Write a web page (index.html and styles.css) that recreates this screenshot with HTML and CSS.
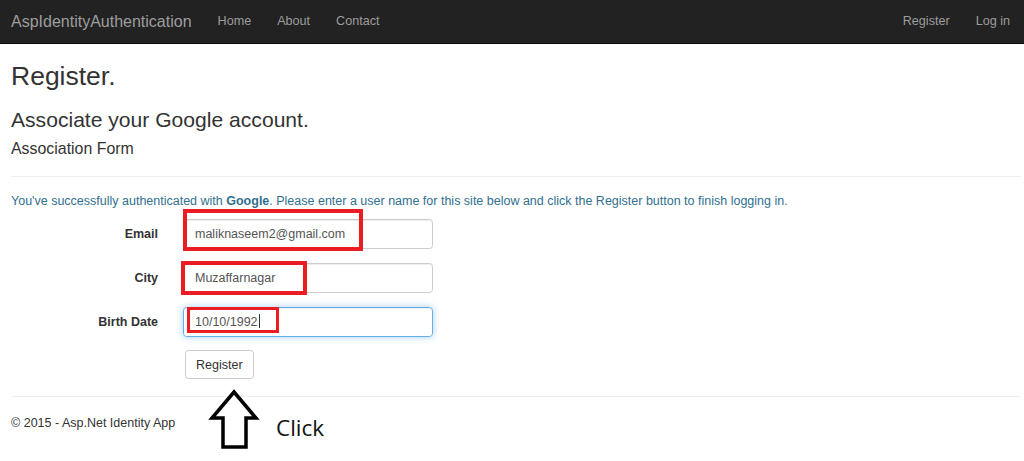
FILE: index.html
```html
<!DOCTYPE html>
<html>
<head>
<meta charset="utf-8">
<title>Register</title>
<link rel="stylesheet" href="styles.css">
</head>
<body>
<div class="navbar">
  <a class="brand">AspIdentityAuthentication</a>
  <ul class="nav">
    <li>Home</li>
    <li>About</li>
    <li>Contact</li>
  </ul>
  <ul class="nav nav-right">
    <li>Register</li>
    <li>Log in</li>
  </ul>
</div>
<div class="content">
  <h2>Register.</h2>
  <h3>Associate your Google account.</h3>
  <h4>Association Form</h4>
  <hr class="rule-top">
  <p class="text-info">You've successfully authenticated with <strong>Google</strong>. Please enter a user name for this site below and click the Register button to finish logging in.</p>
  <div class="form">
    <label>Email</label>
    <div class="input">maliknaseem2@gmail.com</div>
    <label>City</label>
    <div class="input">Muzaffarnagar</div>
    <label>Birth Date</label>
    <div class="input focused">10/10/1992<span class="caret"></span></div>
    <span></span>
    <div class="btn-cell"><button class="btn">Register</button></div>
  </div>
  <hr class="rule-bottom">
  <footer>© 2015 - Asp.Net Identity App</footer>
</div>

<div class="mark mark-email"></div>
<div class="mark mark-city"></div>
<div class="mark mark-date"></div>
<svg class="arrow" width="60" height="70" viewBox="205 385 60 70">
  <polygon points="234,392 256,418 246,418 246,447 223,447 223,418 212,418" fill="#fff" stroke="#000" stroke-width="3.5" stroke-linejoin="miter"/>
</svg>
<div class="click">Click</div>
</body>
</html>
```
FILE: styles.css
```css
* { box-sizing: border-box; }
html, body { margin: 0; padding: 0; }
body {
  position: relative;
  width: 1024px;
  height: 461px;
  overflow: hidden;
  background: #fff;
  font-family: "Liberation Sans", Arial, sans-serif;
  font-size: 12.5px;
  color: #333;
}
.navbar {
  height: 44px;
  background: #222;
  border-bottom: 1px solid #080808;
  display: flex;
  align-items: center;
}
.brand {
  font-size: 16px;
  color: #9d9d9d;
  padding: 0 13px 0 11px;
  line-height: 43px;
}
.nav {
  list-style: none;
  margin: 0;
  padding: 0;
  display: flex;
}
.nav li {
  padding: 0 13px;
  color: #9d9d9d;
  font-size: 12.6px;
  line-height: 43px;
}
.nav-right { margin-left: auto; padding-right: 1px; }
.content { padding: 0 3px 0 11px; }
h2 {
  font-size: 26.5px;
  font-weight: normal;
  line-height: 30px;
  margin: 17px 0 0;
  color: #333;
}
h3 {
  font-size: 21.1px;
  font-weight: normal;
  line-height: 24px;
  margin: 17px 0 0;
}
h4 {
  font-size: 15.9px;
  font-weight: normal;
  line-height: 18px;
  margin: 8px 0 0;
}
hr { border: 0; border-top: 1px solid #eee; margin: 0; }
.rule-top { margin-top: 17.5px; }
.text-info {
  color: #31708f;
  line-height: 18px;
  margin: 15.5px 0 0;
}
.text-info strong { font-weight: bold; }
.form {
  display: grid;
  grid-template-columns: 147px 250px;
  column-gap: 25px;
  row-gap: 14px;
  margin-top: 9px;
  align-items: center;
}
.form label {
  text-align: right;
  font-weight: bold;
}
.input {
  height: 30px;
  border: 1px solid #ccc;
  border-radius: 3.5px;
  padding: 0 11px;
  line-height: 28px;
  color: #555;
  box-shadow: inset 0 1px 1px rgba(0,0,0,.075);
}
.input.focused {
  border-color: #66afe9;
  box-shadow: inset 0 1px 1px rgba(0,0,0,.075), 0 0 7px rgba(102,175,233,.6);
}
.caret {
  display: inline-block;
  width: 1px;
  height: 14px;
  background: #333;
  vertical-align: -2px;
  margin-left: 1px;
}
.btn-cell { padding-left: 2px; }
.btn {
  font-family: inherit;
  font-size: 12.5px;
  color: #333;
  background: #fff;
  border: 1px solid #ccc;
  border-radius: 3.5px;
  height: 29px;
  padding: 0 10px;
  display: block;
  margin-top: -1px;
}
.rule-bottom { margin-top: 17px; }
footer {
  margin-top: 17px;
  line-height: 18px;
}
.mark {
  position: absolute;
  border: 4px solid #ec1c24;
}
.mark-email { left: 183px; top: 209px; width: 180px; height: 42px; }
.mark-city { left: 181px; top: 261px; width: 126px; height: 34px; }
.mark-date { left: 187px; top: 307px; width: 92px; height: 26px; border-width: 3.5px; }
.arrow { position: absolute; left: 205px; top: 385px; }
.click {
  position: absolute;
  left: 276px;
  top: 413px;
  font-family: "Open Sans", "DejaVu Sans", sans-serif;
  font-size: 22.5px;
  line-height: 30px;
  color: #111;
}
```
